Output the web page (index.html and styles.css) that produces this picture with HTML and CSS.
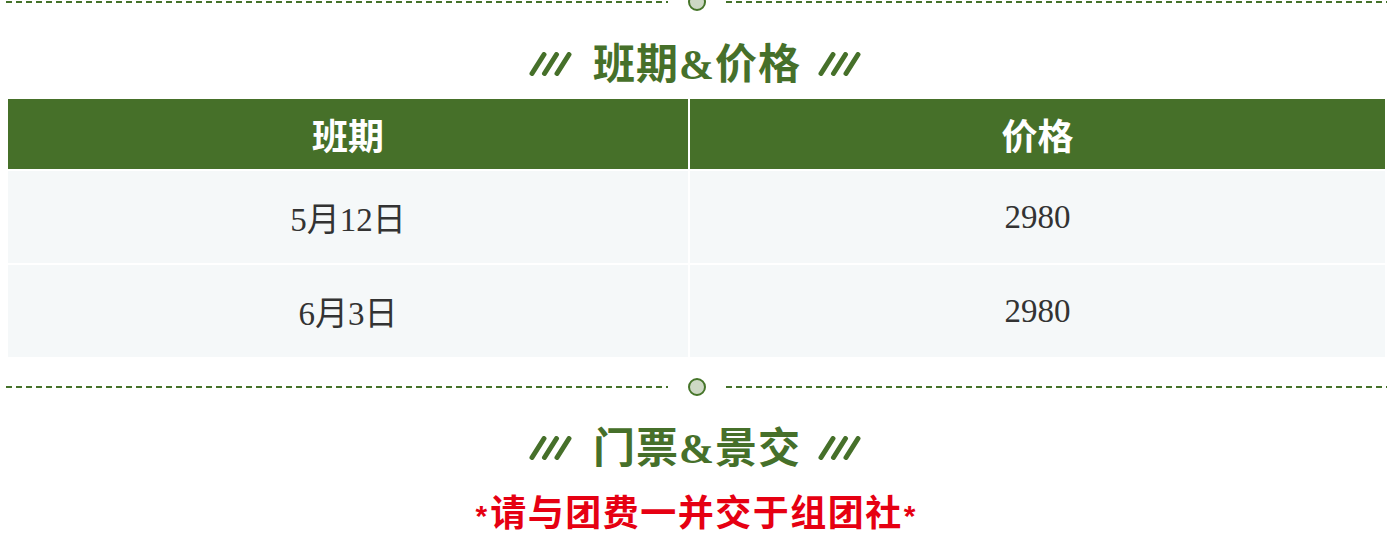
FILE: index.html
```html
<!DOCTYPE html>
<html lang="zh-CN">
<head>
<meta charset="utf-8">
<title>班期&amp;价格</title>
<link rel="stylesheet" href="styles.css">
</head>
<body>
<div class="page">
  <div class="divider divider-top">
    <span class="dash"></span><span class="dot"></span><span class="dash"></span>
  </div>

  <h2 class="title">
    <svg class="slashes" viewBox="0 0 48 24" width="48" height="24" aria-hidden="true">
      <line x1="4" y1="21.5" x2="16" y2="2.5"/>
      <line x1="16.5" y1="21.5" x2="28.5" y2="2.5"/>
      <line x1="29" y1="21.5" x2="41" y2="2.5"/>
    </svg>
    <span class="title-text">班期<span class="amp">&amp;</span>价格</span>
    <svg class="slashes" viewBox="0 0 48 24" width="48" height="24" aria-hidden="true">
      <line x1="4" y1="21.5" x2="16" y2="2.5"/>
      <line x1="16.5" y1="21.5" x2="28.5" y2="2.5"/>
      <line x1="29" y1="21.5" x2="41" y2="2.5"/>
    </svg>
  </h2>

  <div class="table">
    <div class="cell head">班期</div>
    <div class="cell head">价格</div>
    <div class="cell body">5月12日</div>
    <div class="cell body">2980</div>
    <div class="cell body">6月3日</div>
    <div class="cell body">2980</div>
  </div>

  <div class="divider divider-mid">
    <span class="dash"></span><span class="dot"></span><span class="dash"></span>
  </div>

  <h2 class="title title-2">
    <svg class="slashes" viewBox="0 0 48 24" width="48" height="24" aria-hidden="true">
      <line x1="4" y1="21.5" x2="16" y2="2.5"/>
      <line x1="16.5" y1="21.5" x2="28.5" y2="2.5"/>
      <line x1="29" y1="21.5" x2="41" y2="2.5"/>
    </svg>
    <span class="title-text">门票<span class="amp">&amp;</span>景交</span>
    <svg class="slashes" viewBox="0 0 48 24" width="48" height="24" aria-hidden="true">
      <line x1="4" y1="21.5" x2="16" y2="2.5"/>
      <line x1="16.5" y1="21.5" x2="28.5" y2="2.5"/>
      <line x1="29" y1="21.5" x2="41" y2="2.5"/>
    </svg>
  </h2>

  <p class="notice"><span class="ast">*</span>请与团费一并交于组团社<span class="ast">*</span></p>
</div>
</body>
</html>
```

FILE: styles.css
```css
html, body {
  margin: 0;
  padding: 0;
  background: #ffffff;
}

body {
  font-family: "Noto Sans CJK SC", "Noto Sans", sans-serif;
  overflow: hidden;
}

.page {
  width: 1393px;
  padding: 0 8px;
  box-sizing: border-box;
}

.divider {
  display: flex;
  align-items: center;
  height: 18px;
  margin: 0 -2px;
}

.divider-top {
  margin-top: -7px;
}

.divider-mid {
  margin-top: 21px;
}

.dash {
  flex: 1;
  height: 2px;
  background: repeating-linear-gradient(90deg, #44722a 0 6px, transparent 6px 10px);
}

.dot {
  width: 18px;
  height: 18px;
  box-sizing: border-box;
  border: 2px solid #46752a;
  border-radius: 50%;
  background: #cdd8c4;
  margin: 0 20px;
}

.title {
  display: flex;
  justify-content: center;
  align-items: center;
  gap: 17px;
  height: 50px;
  margin: 27px 0 11px;
  font-size: 42px;
  font-weight: 700;
  color: #46702a;
  line-height: 50px;
}

.title-2 {
  margin-top: 26px;
  margin-bottom: 18px;
}

.title-text {
  display: block;
  white-space: nowrap;
  letter-spacing: 1px;
  margin-right: -1px;
}

.amp {
  font-family: "Liberation Serif", serif;
  font-weight: 700;
}

.slashes {
  display: block;
  flex: none;
  margin-top: 2px;
}

.slashes line {
  stroke: #46702a;
  stroke-width: 5;
  stroke-linecap: round;
}

.table {
  display: grid;
  grid-template-columns: 680px 1fr;
  grid-template-rows: 70px 92px 92px;
  gap: 2px;
}

.cell {
  display: flex;
  align-items: center;
  justify-content: center;
}

.head {
  background: #467029;
  color: #ffffff;
  font-size: 36px;
  font-weight: 700;
}

.body {
  background: #f5f8f9;
  color: #333333;
  font-family: "Liberation Serif", "Noto Sans CJK SC", serif;
  font-size: 33px;
}

.notice {
  margin: 0;
  height: 40px;
  line-height: 40px;
  text-align: center;
  color: #e60012;
  font-size: 36px;
  font-weight: 700;
  letter-spacing: 1.5px;
  white-space: nowrap;
}

.ast {
  font-family: "Liberation Sans", sans-serif;
  font-weight: 700;
  font-size: 30px;
  letter-spacing: 0;
  margin: 0 3px 0 1px;
}
```
